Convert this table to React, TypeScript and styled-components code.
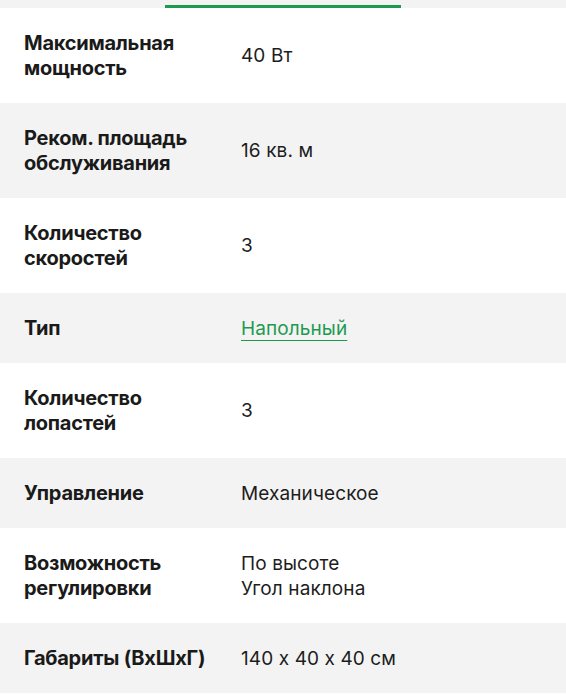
import React from "react";
import styled, { createGlobalStyle } from "styled-components";

const GlobalStyle = createGlobalStyle`
  html, body {
    margin: 0;
    padding: 0;
    background: #ffffff;
  }
  body {
    font-family: "Inter", "Noto Sans", sans-serif;
    font-feature-settings: "calt" 0;
    color: #1d1d1d;
    -webkit-font-smoothing: antialiased;
  }
`;

const Page = styled.div`
  width: 566px;
  background: #ffffff;
`;

const TabStrip = styled.div`
  height: 8px;
  background: #f3f3f3;
  display: flex;
  align-items: flex-end;
  padding-left: 165px;
`;

const TabIndicator = styled.div`
  width: 236px;
  height: 3px;
  background: #1e9a4f;
`;

const SpecList = styled.dl`
  margin: 0;
`;

const SpecRow = styled.div<{ $shaded: boolean }>`
  display: grid;
  grid-template-columns: 200px 1fr;
  column-gap: 17px;
  align-items: center;
  padding: 22.5px 24px;
  background: ${(p) => (p.$shaded ? "#f3f3f3" : "#ffffff")};
`;

const Label = styled.dt`
  margin: 0;
  font-size: 20px;
  line-height: 25px;
  font-weight: 700;
  letter-spacing: -0.25px;
  color: #1a1a1a;
`;

const Value = styled.dd`
  margin: 0;
  font-size: 19px;
  line-height: 25px;
  font-weight: 400;
  letter-spacing: 0.1px;
  color: #1d1d1d;
`;

const ValueLink = styled.a`
  color: #1e9a4f;
  text-decoration: underline;
  text-decoration-thickness: 1px;
  text-underline-offset: 5px;
`;

type Spec = {
  label: string;
  values: string[];
  link?: boolean;
};

const specs: Spec[] = [
  { label: "Максимальная мощность", values: ["40 Вт"] },
  { label: "Реком. площадь обслуживания", values: ["16 кв. м"] },
  { label: "Количество скоростей", values: ["3"] },
  { label: "Тип", values: ["Напольный"], link: true },
  { label: "Количество лопастей", values: ["3"] },
  { label: "Управление", values: ["Механическое"] },
  { label: "Возможность регулировки", values: ["По высоте", "Угол наклона"] },
  { label: "Габариты (ВхШхГ)", values: ["140 x 40 x 40 см"] },
];

export default function App() {
  return (
    <Page>
      <GlobalStyle />
      <TabStrip>
        <TabIndicator />
      </TabStrip>
      <SpecList>
        {specs.map((spec, idx) => (
          <SpecRow key={spec.label} $shaded={idx % 2 === 1}>
            <Label>{spec.label}</Label>
            <Value>
              {spec.link ? (
                <ValueLink href="#">{spec.values[0]}</ValueLink>
              ) : (
                spec.values.map((v, i) => (
                  <React.Fragment key={v}>
                    {i > 0 && <br />}
                    {v}
                  </React.Fragment>
                ))
              )}
            </Value>
          </SpecRow>
        ))}
      </SpecList>
    </Page>
  );
}
